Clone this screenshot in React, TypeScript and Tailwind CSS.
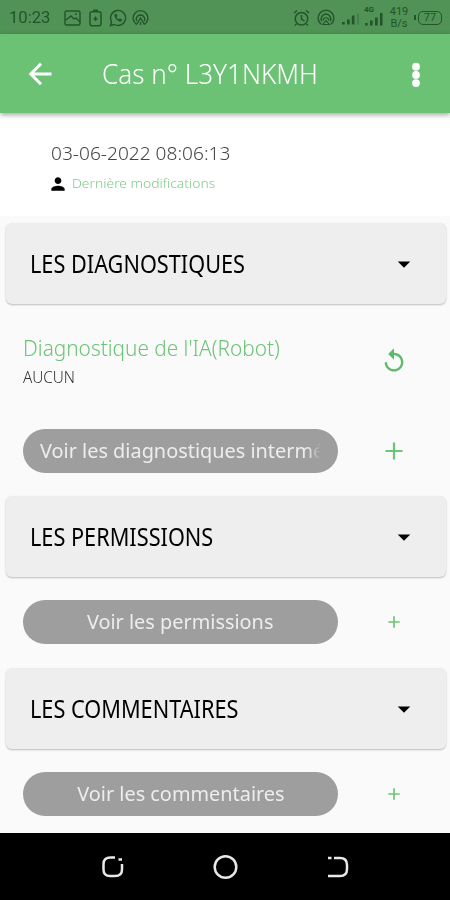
import type { ReactNode } from 'react'
import { MdArrowDropDown, MdPerson, MdReplay } from 'react-icons/md'

function StatusBar() {
  return (
    <div className="flex h-[34px] items-center bg-[#519257] pl-[9px] pr-[8px] pt-[1px] text-[#23542a]">
      <span className="w-[43px] font-['Roboto'] text-[16px] font-normal leading-none">
        <span className="inline-block origin-left scale-x-[1.04] whitespace-nowrap">10:23</span>
      </span>
      <svg className="ml-[12px] h-[18px] w-[17px]" viewBox="0 0 17 18" fill="none" stroke="currentColor" strokeWidth="1.4">
        <rect x="1" y="2" width="15" height="14" rx="1.5" />
        <path d="M2 11l5-4 3 3 2-1 4 4M11 5h2" />
      </svg>
      <svg className="ml-[8px] h-[18px] w-[13px]" viewBox="0 0 13 18" fill="none" stroke="currentColor" strokeWidth="1.5">
        <rect x="1" y="2.700" width="11" height="14" rx="2" />
        <path d="M4 1.200h5M6.500 7.500v4.500M4.500 9.800h4" />
      </svg>
      <svg className="ml-[7px] h-[18px] w-[18px]" viewBox="0 0 18 18" fill="none" stroke="currentColor" strokeWidth="1.4">
        <path d="M1.500 16.500l1-4A7.500 7.500 0 1 1 5.500 15.500z" />
        <path d="M6 5c-1.500 3 3 8 6 7.500l1-2-2.200-1-1 1C8.500 10 7.600 9 7.400 8l.8-1L7.300 5z" fill="currentColor" strokeWidth="0.400" />
      </svg>
      <svg className="ml-[5px] h-[18px] w-[17px]" viewBox="0 0 17 18" fill="none" stroke="currentColor" strokeWidth="1.4">
        <path d="M4.500 15.300a7.400 7.400 0 1 1 8 0M4.700 12a4.200 4.200 0 1 1 7.600 0" />
        <path d="M4.500 15.500l4-6.500 4 6.500M8.500 13v3" />
      </svg>

      <svg className="ml-auto h-[18px] w-[17px]" viewBox="0 0 17 18" fill="none" stroke="currentColor" strokeWidth="1.5">
        <circle cx="8.500" cy="9.800" r="6.300" />
        <path d="M8.500 6v4l3 2M1 4l3-2.500M16 4l-3-2.500M3.500 15L2 16.500M13.500 15l1.500 1.500" />
      </svg>
      <svg className="ml-[7px] h-[18px] w-[18px]" viewBox="0 0 18 18" fill="none" stroke="currentColor" strokeWidth="1.4">
        <path d="M4 15.200a7.900 7.900 0 1 1 10 0M4.700 12a4.800 4.800 0 1 1 8.600 0" />
        <path d="M6.300 11.500a2.700 2.700 0 0 1 5.400 0M5.500 15.500l3.500-4 3.500 4z" strokeWidth="1.100" />
      </svg>
      <svg className="ml-[7px] h-[18px] w-[18px]" viewBox="0 0 18 18" fill="currentColor">
        <path d="M0 13h2.700v2.500H0zM5 10.500h2.700v5H5zM9.800 6.500h2.700v9H9.800z" />
        <path d="M15 4.500h2v11h-2z" opacity="0.3" />
      </svg>
      <div className="ml-[4px] flex h-[24px] w-[19px] flex-col">
        <span className="font-['Roboto'] text-[8px] font-bold leading-[7px]">4G</span>
        <svg className="-mt-[2px] h-[15px] w-[19px] shrink-0" viewBox="0 0 19 15" fill="currentColor">
          <path d="M1 12h2.700v2.500H1zM6 9.500h2.700v5H6zM11 6.500h2.700v8H11zM16 2h2.500v12.500H16z" />
        </svg>
      </div>
      <div className="ml-[6px] flex w-[20px] flex-col items-center font-['Roboto'] text-[11px] font-normal leading-[12px]">
        <span className="h-[12px]">419</span>
        <span className="h-[12px]">B/s</span>
      </div>
      <div className="ml-[5px] h-[5px] w-[2px] bg-current" />
      <div className="ml-[2px] flex h-[14px] w-[24px] items-center justify-center rounded-[5px] border-[1.5px] border-current font-['Roboto'] text-[11px] font-normal leading-none">
        77
      </div>
    </div>
  )
}

function AppBar() {
  return (
    <header className="relative z-10 flex h-[79px] items-center bg-[#6bc275] text-white shadow-[0_2px_5px_rgba(0,0,0,0.35)]">
      <svg className="ml-[28px] size-[24px]" viewBox="0 0 24 24" fill="none" stroke="currentColor" strokeWidth="3">
        <path d="M23.500 12H3M13 1.800L2.800 12 13 22.200" />
      </svg>
      <h1 className="ml-[50px] w-[290px] origin-left scale-x-[0.966] whitespace-nowrap text-[27px] leading-none">
        Cas n° L3Y1NKMH
      </h1>
      <svg className="absolute right-[29px] mt-[2px] h-[26px] w-[10px]" viewBox="0 0 10 26" fill="currentColor">
        <circle cx="5" cy="4.700" r="3.900" />
        <circle cx="5" cy="12.900" r="3.900" />
        <circle cx="5" cy="21.100" r="3.900" />
      </svg>
    </header>
  )
}

function Panel({ title }: { title: string }) {
  return (
    <div className="ml-[6px] mr-[4px] flex h-[81px] items-center justify-between rounded-[6px] bg-[#eeeeee] pl-[24px] pr-[27px] shadow-[0_1px_2px_rgba(0,0,0,0.25)]">
      <h2 className="origin-left scale-x-[0.868] whitespace-nowrap text-[25px] font-normal leading-none text-black">
        {title}
      </h2>
      <MdArrowDropDown className="size-[30px] text-black" />
    </div>
  )
}

function Plus({ big }: { big?: boolean }) {
  return (
    <svg className={big ? 'size-[18px]' : 'size-[12px]'} viewBox="0 0 18 18" fill="none" stroke="#6cc476" strokeWidth={big ? 2.2 : 2.5}>
      <path d="M9 0.500v17M0.500 9h17" />
    </svg>
  )
}

function ActionRow({ children, big, fade }: { children: ReactNode; big?: boolean; fade?: boolean }) {
  return (
    <div className="flex h-[44px] items-center pl-[23px]">
      <button className="flex h-full w-[315px] items-center justify-center rounded-full bg-[#9e9e9e] text-[#ededed]">
        <span
          className={
            fade
              ? '-mt-[2px] w-[281px] overflow-hidden [mask-image:linear-gradient(to_right,black_95%,transparent_100%)]'
              : '-mt-[2px] flex w-[281px] justify-center'
          }
        >
          <span
            className={
              fade
                ? 'inline-block origin-left scale-x-[0.97] whitespace-nowrap text-[20.5px] font-normal leading-[30px]'
                : 'inline-block scale-x-[0.97] whitespace-nowrap text-[20.5px] font-normal leading-[30px]'
            }
          >
            {children}
          </span>
        </span>
      </button>
      <div className="ml-[41px] flex w-[30px] justify-center">
        <Plus big={big} />
      </div>
    </div>
  )
}

export default function App() {
  return (
    <div className="flex h-[900px] w-[450px] flex-col overflow-hidden bg-[#fafafa] font-['Noto_Sans',sans-serif] font-light">
      <StatusBar />
      <AppBar />

      <section className="h-[103px] bg-white pl-[51px] pt-[30px]">
        <p className="origin-left scale-x-[1.006] whitespace-nowrap text-[19px] leading-[20px] text-[#444]">
          03-06-2022 08:06:13
        </p>
        <div className="mt-[11px] flex h-[20px] items-center">
          <MdPerson className="-ml-[3px] size-[20px] text-black" />
          <span className="-mt-[1px] ml-[4px] origin-left scale-x-[1.067] whitespace-nowrap text-[13px] text-[#7fcb88]">
            Dernière modifications
          </span>
        </div>
      </section>

      <main className="flex-1 pt-[7px]">
        <Panel title="LES DIAGNOSTIQUES" />
        <div className="flex h-[125px] pl-[23px] pt-[31px]">
          <div className="w-[341px]">
            <p className="origin-left scale-x-[0.99] whitespace-nowrap text-[21px] leading-[26px] text-[#6cc476]">
              Diagnostique de l'IA(Robot)
            </p>
            <p className="mt-[6px] origin-left scale-x-[0.955] text-[16px] leading-[20px] text-[#333]">AUCUN</p>
          </div>
          <MdReplay className="mt-[12px] ml-[16px] size-[28px] text-[#5dba68]" />
        </div>
        <ActionRow big fade>Voir les diagnostiques intermé</ActionRow>

        <div className="mt-[23px]">
          <Panel title="LES PERMISSIONS" />
        </div>
        <div className="mt-[23px]">
          <ActionRow>Voir les permissions</ActionRow>
        </div>

        <div className="mt-[24px]">
          <Panel title="LES COMMENTAIRES" />
        </div>
        <div className="mt-[23px]">
          <ActionRow>Voir les commentaires</ActionRow>
        </div>
      </main>

      <nav className="flex h-[67px] items-center bg-black pl-[101px] text-[#e8e8e8]">
        <svg className="h-[24px] w-[24px]" viewBox="0 0 24 24" fill="none" stroke="currentColor" strokeWidth="2.500">
          <path d="M14 2.500H9.500Q2.500 2.500 2.500 9v5.500q0 6.500 6.500 6.500h5q7 0 7-6.500V9" />
          <path d="M17.500 4.500h3.500" />
        </svg>
        <svg className="ml-[88px] h-[26px] w-[26px]" viewBox="0 0 26 26" fill="none" stroke="currentColor" strokeWidth="2.500">
          <circle cx="12.500" cy="13" r="10.800" />
        </svg>
        <svg className="ml-[88px] h-[24px] w-[24px]" viewBox="0 0 24 24" fill="none" stroke="currentColor" strokeWidth="2.500">
          <path d="M7 3h6q7 0 7 7v4q0 7-7 7H1M1 3h3.500" />
        </svg>
      </nav>
    </div>
  )
}
